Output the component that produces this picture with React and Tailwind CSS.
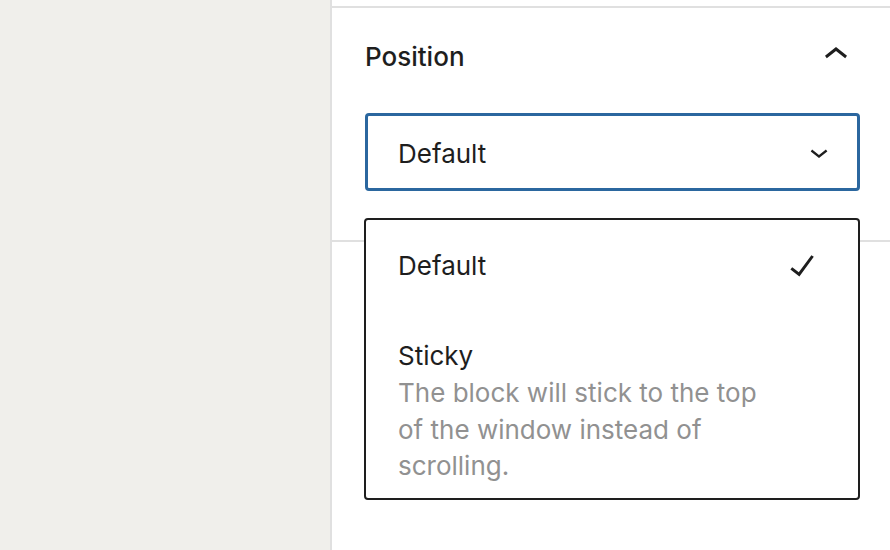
import React from 'react'

const font = { fontFamily: 'Inter, "Noto Sans", sans-serif' }

const ChevronUp = () => (
    <svg viewBox="0 0 24 24" className="w-[48px] h-[48px] fill-[#1e1e1e]">
        <path d="M6.5 12.4L12 8l5.5 4.4-.9 1.2L12 10l-4.6 3.6-.9-1.2z" />
    </svg>
)

const ChevronDown = () => (
    <svg viewBox="0 0 24 24" className="w-[36px] h-[36px] fill-[#1e1e1e]">
        <path d="M17.5 11.6L12 16l-5.5-4.4.9-1.2L12 14l4.6-3.6 1 1.2z" />
    </svg>
)

const Check = () => (
    <svg viewBox="0 0 24 24" className="w-[48px] h-[48px] fill-[#1e1e1e]">
        <path d="M16.7 7.1l-6.3 8.5-3.3-2.5-.9 1.2 4.5 3.4L17.9 7.9z" />
    </svg>
)

export default function App() {
    return (
        <div className="flex w-[890px] h-[550px] overflow-hidden text-[#1e1e1e]" style={font}>
            <div className="w-[332px] bg-[#f0efeb] border-r-2 border-[#e0e0e0]"></div>

            <div className="flex-1 bg-white relative">
                <div className="h-[6px]"></div>
                <div className="border-t-2 border-b-2 border-[#e0e0e0] pl-[33px] pr-[30px] pt-[15px] pb-[49px]">
                    <div className="flex items-center justify-between h-[64px]">
                        <span className="text-[26px] font-medium leading-none pt-[4px]">Position</span>
                        <ChevronUp />
                    </div>
                    <div className="mt-[26px] h-[78px] border-[3px] border-[#2b679f] rounded-[4px] flex items-center justify-between pl-[30px] pr-[20px]">
                        <span className="text-[26px] leading-none pt-[4px]">Default</span>
                        <ChevronDown />
                    </div>
                </div>

                {/* open dropdown */}
                <div className="absolute left-[32px] top-[218px] w-[496px] h-[282px] bg-white border-2 border-[#1e1e1e] rounded-[4px]">
                    <div className="h-[90px] flex items-center justify-between pl-[32px] pr-[32px]">
                        <span className="text-[26px] leading-none pt-[2px]">Default</span>
                        <Check />
                    </div>
                    <div className="pl-[32px] pr-[32px] pt-[28px]">
                        <div className="text-[26px] leading-[36px]">Sticky</div>
                        <div className="text-[26px] leading-[36.5px] text-[#919191] w-[380px] pt-[1px]">
                            The block will stick to the top of the window instead of scrolling.
                        </div>
                    </div>
                </div>
            </div>
        </div>
    )
}
